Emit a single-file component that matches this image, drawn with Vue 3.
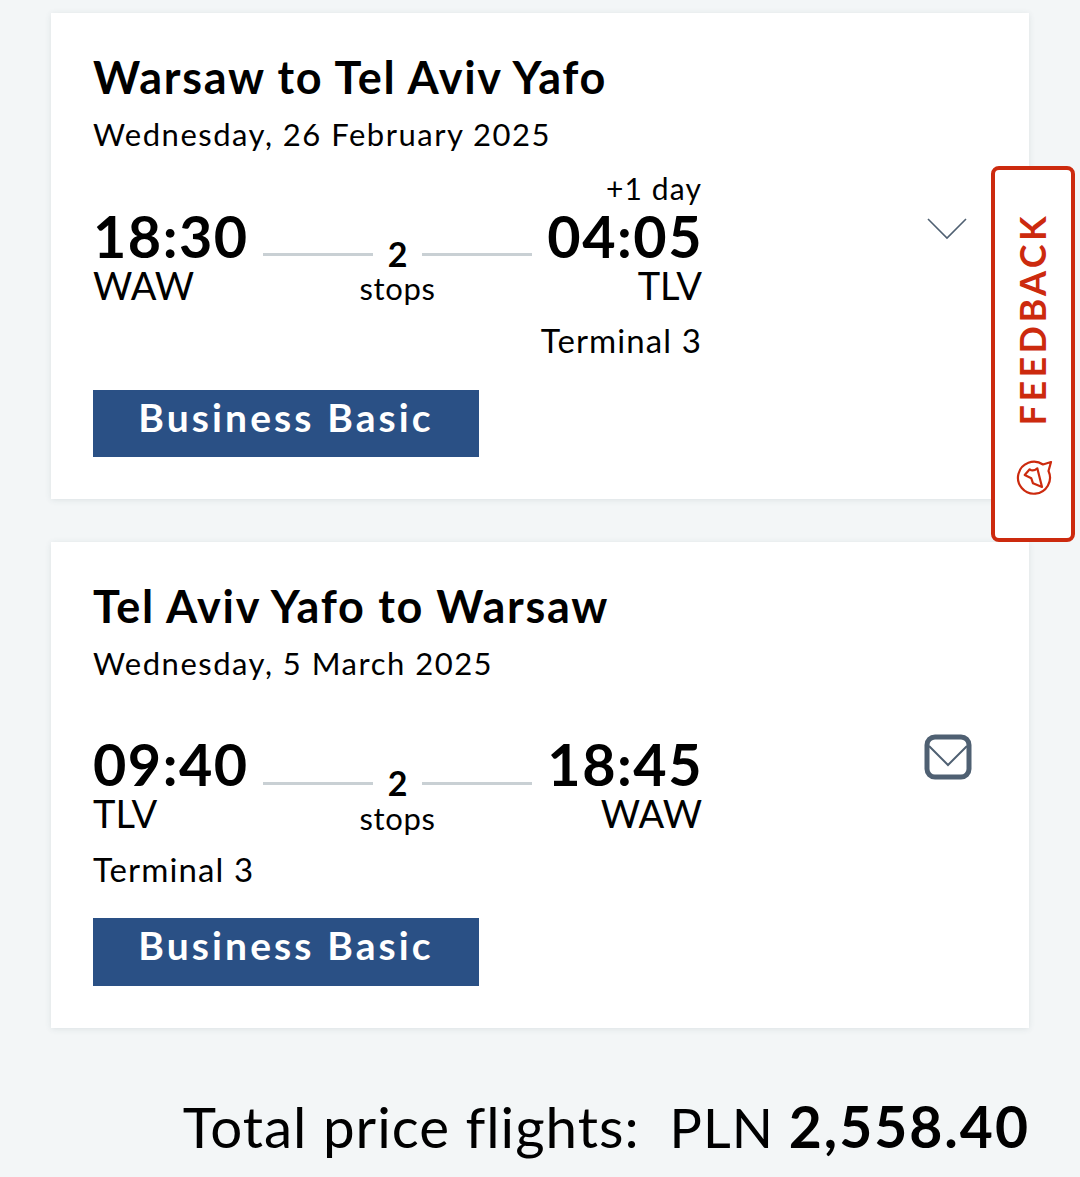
<script setup>
const flights = [
  {
    title: 'Warsaw to Tel Aviv Yafo',
    date: 'Wednesday, 26 February 2025',
    dep: '18:30', depCode: 'WAW', depTerm: '',
    arr: '04:05', arrCode: 'TLV', arrTerm: 'Terminal 3',
    extra: '+1 day', icon: 'chevron',
  },
  {
    title: 'Tel Aviv Yafo to Warsaw',
    date: 'Wednesday, 5 March 2025',
    dep: '09:40', depCode: 'TLV', depTerm: 'Terminal 3',
    arr: '18:45', arrCode: 'WAW', arrTerm: '',
    extra: '', icon: 'mail',
  },
]
</script>

<template>
  <div class="page">
    <section v-for="f in flights" :key="f.title" class="card">
      <h2 class="title">{{ f.title }}</h2>
      <p class="date">{{ f.date }}</p>
      <div class="extra">{{ f.extra }}</div>
      <div class="main">
        <div class="route">
          <div class="end">
            <div class="time">{{ f.dep }}</div>
            <div class="code">{{ f.depCode }}</div>
            <div v-if="f.depTerm" class="term">{{ f.depTerm }}</div>
          </div>
          <div class="mid">
            <span class="line"></span>
            <div class="stops"><b>2</b><span>stops</span></div>
            <span class="line"></span>
          </div>
          <div class="end right">
            <div class="time">{{ f.arr }}</div>
            <div class="code">{{ f.arrCode }}</div>
            <div v-if="f.arrTerm" class="term">{{ f.arrTerm }}</div>
          </div>
        </div>
        <div class="icon">
          <svg v-if="f.icon === 'chevron'" class="chev" width="42" height="26" viewBox="0 0 42 26">
            <path d="M2 3 L21 22 L40 3" fill="none" stroke="#4f6072" stroke-width="1.6" />
          </svg>
          <svg v-else class="mail" width="48" height="46" viewBox="0 0 48 46">
            <rect x="3" y="3" width="42" height="40" rx="8" fill="none" stroke="#4f6072" stroke-width="5" />
            <path d="M5 12 L24 31 L43 12" fill="none" stroke="#4f6072" stroke-width="2" />
          </svg>
        </div>
      </div>
      <div class="fare">Business Basic</div>
    </section>

    <div class="total">
      <span class="label">Total price flights:</span>
      <span class="price">PLN <b>2,558.40</b></span>
    </div>

    <div class="feedback">
      <span class="fb-text">FEEDBACK</span>
      <svg class="fb-icon" width="38" height="38" viewBox="0 0 38 38">
        <path d="M28 6.5 A16 16 0 1 0 33.5 13 L36 4 Z" fill="none" stroke="#cc2a0e" stroke-width="2.2" stroke-linejoin="round" />
        <path d="M22.3 10.3 L27 29 L18 25.3 L16.3 20.3 L9.7 17 L14.7 11.3 Q18 14 22.3 10.3 Z" fill="none" stroke="#cc2a0e" stroke-width="2.2" stroke-linejoin="round" />
      </svg>
    </div>
  </div>
</template>

<style>
html, body { margin: 0; background: #f3f6f7; }
</style>

<style scoped>
.page {
  position: relative;
  width: 1080px;
  height: 1177px;
  overflow: hidden;
  padding-top: 13px;
  box-sizing: border-box;
  background: #f3f6f7;
  font-family: Lato, "Noto Sans", sans-serif;
  color: #000;
}

.card {
  width: 978px;
  height: 486px;
  margin: 0 0 43px 51px;
  padding: 0 42px;
  box-sizing: border-box;
  background: #fff;
  box-shadow: 0 1px 6px rgba(60, 80, 90, 0.12);
}

.title {
  margin: 0;
  padding-top: 36px;
  font-size: 45px;
  line-height: 56px;
  font-weight: 700;
  letter-spacing: 1.7px;
}

.date {
  margin: 10px 0 0;
  font-size: 31px;
  line-height: 38px;
  font-weight: 400;
  letter-spacing: 1.5px;
}

.extra {
  width: 609px;
  height: 39px;
  margin-top: 16px;
  text-align: right;
  font-size: 30px;
  line-height: 38px;
  letter-spacing: 1.1px;
}

.card + .card .extra { margin-top: 15px; }

.main { display: flex; }

.route {
  width: 609px;
  display: flex;
  justify-content: space-between;
}

.end { width: 170px; }
.right { text-align: right; }
.right .time { margin-right: -1px; }

.time {
  font-size: 57.5px;
  line-height: 56px;
  font-weight: 700;
  letter-spacing: 1.5px;
}

.code {
  font-size: 38px;
  line-height: 42px;
}

.term {
  margin-top: 14px;
  font-size: 33px;
  line-height: 40px;
  letter-spacing: 1.1px;
  white-space: nowrap;
}

.card + .card .term { margin-top: 15px; }

.right .term { margin-left: -40px; }

.mid {
  display: flex;
  align-items: flex-start;
  width: 269px;
  padding-top: 45px;
}

.card + .card .mid { padding-top: 46px; }

.line {
  flex: none;
  width: 110px;
  height: 3px;
  background: #c9d0d4;
}

.stops {
  flex: none;
  width: 49px;
  display: flex;
  flex-direction: column;
  align-items: center;
  margin-top: -16px;
}

.stops b {
  font-size: 34px;
  line-height: 33px;
  font-weight: 700;
}

.stops span {
  font-size: 31px;
  line-height: 36px;
  letter-spacing: 0.6px;
}

.card + .card .stops span { margin-top: 1px; }

.icon {
  margin-left: 205px;
  width: 80px;
  display: flex;
  justify-content: center;
  align-items: flex-start;
}

.chev { margin-top: 8px; }
.mail { margin: -2px 0 0 1px; }

.fare {
  width: 386px;
  height: 67px;
  margin-top: 30px;
  background: #2a5085;
  color: #fff;
  text-align: center;
  font-size: 39px;
  line-height: 54px;
  font-weight: 700;
  letter-spacing: 3.1px;
}

.card + .card .fare {
  height: 68px;
  margin-top: 29px;
}

.total {
  display: flex;
  justify-content: flex-end;
  gap: 30px;
  width: 1030px;
  margin-top: 62px;
  font-size: 56.5px;
  line-height: 72px;
  letter-spacing: 1px;
}

.price { font-size: 54px; }

.price b {
  font-size: 57px;
  font-weight: 700;
  letter-spacing: 2px;
}

.feedback {
  position: absolute;
  left: 991px;
  top: 166px;
  width: 84px;
  height: 376px;
  box-sizing: border-box;
  border: 4px solid #cc2a0e;
  border-radius: 8px;
  background: #fff;
  display: flex;
  flex-direction: column;
  align-items: center;
  padding-top: 43px;
}

.fb-text {
  margin-right: 3px;
  writing-mode: vertical-rl;
  transform: rotate(180deg);
  font-size: 36px;
  line-height: 40px;
  font-weight: 700;
  color: #cc2a0e;
  letter-spacing: 3.4px;
}

.fb-icon { margin: 33px 0 0 2px; }
</style>
